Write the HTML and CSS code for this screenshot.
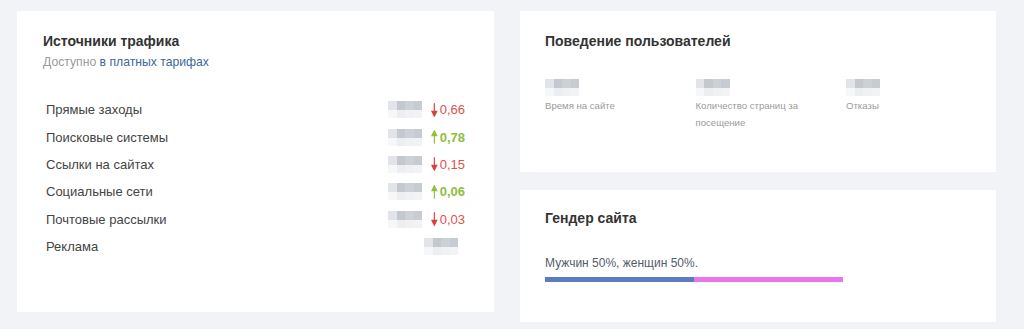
FILE: index.html
```html
<!DOCTYPE html>
<html lang="ru">
<head>
<meta charset="utf-8">
<title>Статистика</title>
<link rel="stylesheet" href="styles.css">
</head>
<body>
<div class="page">
  <section class="card card-traffic">
    <h2 class="title">Источники трафика</h2>
    <p class="subtitle">Доступно <a class="link" href="#">в платных тарифах</a></p>
    <ul class="rows">
      <li class="row">
        <span class="name">Прямые заходы</span>
        <span class="blur"><i></i><i></i><i></i><i></i><i></i><i></i><i></i><i></i></span>
        <span class="change down"><svg class="arrow" viewBox="0 0 7 14"><path d="M3.5 0V11" /><path class="head" d="M1 8.5L3.5 13.5L6 8.5Z" /></svg>0,66</span>
      </li>
      <li class="row">
        <span class="name">Поисковые системы</span>
        <span class="blur"><i></i><i></i><i></i><i></i><i></i><i></i><i></i><i></i></span>
        <span class="change up"><svg class="arrow" viewBox="0 0 7 14"><path d="M3.5 14V3" /><path class="head" d="M1 5.5L3.5 0.5L6 5.5Z" /></svg>0,78</span>
      </li>
      <li class="row">
        <span class="name">Ссылки на сайтах</span>
        <span class="blur"><i></i><i></i><i></i><i></i><i></i><i></i><i></i><i></i></span>
        <span class="change down"><svg class="arrow" viewBox="0 0 7 14"><path d="M3.5 0V11" /><path class="head" d="M1 8.5L3.5 13.5L6 8.5Z" /></svg>0,15</span>
      </li>
      <li class="row">
        <span class="name">Социальные сети</span>
        <span class="blur"><i></i><i></i><i></i><i></i><i></i><i></i><i></i><i></i></span>
        <span class="change up"><svg class="arrow" viewBox="0 0 7 14"><path d="M3.5 14V3" /><path class="head" d="M1 5.5L3.5 0.5L6 5.5Z" /></svg>0,06</span>
      </li>
      <li class="row">
        <span class="name">Почтовые рассылки</span>
        <span class="blur"><i></i><i></i><i></i><i></i><i></i><i></i><i></i><i></i></span>
        <span class="change down"><svg class="arrow" viewBox="0 0 7 14"><path d="M3.5 0V11" /><path class="head" d="M1 8.5L3.5 13.5L6 8.5Z" /></svg>0,03</span>
      </li>
      <li class="row">
        <span class="name">Реклама</span>
        <span class="blur blur-solo"><i></i><i></i><i></i><i></i><i></i><i></i><i></i><i></i></span>
      </li>
    </ul>
  </section>

  <div class="side">
    <section class="card card-behavior">
      <h2 class="title">Поведение пользователей</h2>
      <div class="metrics">
        <div class="metric">
          <span class="blur"><i></i><i></i><i></i><i></i><i></i><i></i><i></i><i></i></span>
          <span class="metric-label">Время на сайте</span>
        </div>
        <div class="metric">
          <span class="blur"><i></i><i></i><i></i><i></i><i></i><i></i><i></i><i></i></span>
          <span class="metric-label">Количество страниц за посещение</span>
        </div>
        <div class="metric">
          <span class="blur"><i></i><i></i><i></i><i></i><i></i><i></i><i></i><i></i></span>
          <span class="metric-label">Отказы</span>
        </div>
      </div>
    </section>

    <section class="card card-gender">
      <h2 class="title">Гендер сайта</h2>
      <p class="gender-text">Мужчин 50%, женщин 50%.</p>
      <div class="gender-bar">
        <span class="male" style="width:50%"></span>
        <span class="female" style="width:50%"></span>
      </div>
    </section>
  </div>
</div>
</body>
</html>
```

FILE: styles.css
```css
* {
  box-sizing: border-box;
}

html, body {
  margin: 0;
  padding: 0;
}

body {
  background: #f2f3f7;
  font-family: "Liberation Sans", Arial, sans-serif;
  color: #444;
}

.page {
  display: flex;
  gap: 26px;
  padding: 11px 17px;
}

.card {
  background: #fff;
}

.card-traffic {
  width: 477px;
  height: 301px;
  padding: 21px 29px 0 26px;
}

.side {
  width: 476px;
  display: flex;
  flex-direction: column;
  gap: 18px;
}

.card-behavior {
  height: 161px;
  padding: 21px 25px 0 25px;
}

.card-gender {
  height: 132px;
  padding: 19px 25px 0 25px;
}

.title {
  margin: 0;
  font-size: 14px;
  line-height: 18px;
  font-weight: bold;
  color: #333;
}

.subtitle {
  margin: 4px 0 0;
  font-size: 12.2px;
  line-height: 16px;
  color: #9a9a9a;
}

.link {
  color: #3b689b;
  text-decoration: none;
}

.rows {
  list-style: none;
  margin: 26px 0 0;
  padding: 0 0 0 3px;
}

.row {
  display: flex;
  align-items: center;
  height: 27.4px;
  font-size: 13px;
}

.name {
  flex: 1;
  color: #444;
}

.blur {
  display: grid;
  grid-template-columns: repeat(4, 8.5px);
  grid-template-rows: 9px 8px;
  width: 34px;
  height: 17px;
}

.blur i:nth-child(1) { background: #e2e4e9; }
.blur i:nth-child(2) { background: #c4c8cf; }
.blur i:nth-child(3) { background: #cdd0d6; }
.blur i:nth-child(4) { background: #c7cbd2; }
.blur i:nth-child(5) { background: #f6f7f9; }
.blur i:nth-child(6) { background: #eceef1; }
.blur i:nth-child(7) { background: #f0f1f3; }
.blur i:nth-child(8) { background: #f2f3f5; }

.blur-solo {
  margin-right: 7px;
}

.change {
  display: flex;
  align-items: center;
  width: 34px;
  margin-left: 9px;
  font-size: 13px;
}

.arrow {
  width: 7px;
  height: 14px;
  margin-right: 2px;
}

.arrow path {
  fill: none;
  stroke-width: 1.2;
}

.arrow path.head {
  stroke: none;
}

.down {
  color: #e0524e;
}

.down .arrow path { stroke: #d9403c; }
.down .arrow path.head { fill: #d9403c; }

.up {
  color: #8dc042;
  font-weight: bold;
}

.up .arrow path { stroke: #8dc042; }
.up .arrow path.head { fill: #8dc042; }

.metrics {
  display: flex;
  margin-top: 29px;
}

.metric {
  display: flex;
  flex-direction: column;
  flex: none;
  width: 150.5px;
  padding-right: 14px;
}

.metric-label {
  margin-top: 1px;
  font-size: 9.6px;
  line-height: 17px;
  color: #9b9b9b;
}

.gender-text {
  margin: 28px 0 0;
  font-size: 12px;
  line-height: 16px;
  color: #555c6b;
}

.gender-bar {
  display: flex;
  width: 298px;
  height: 5px;
  margin-top: 6px;
}

.male {
  background: #5b7bc4;
}

.female {
  background: #e975ec;
}
```
